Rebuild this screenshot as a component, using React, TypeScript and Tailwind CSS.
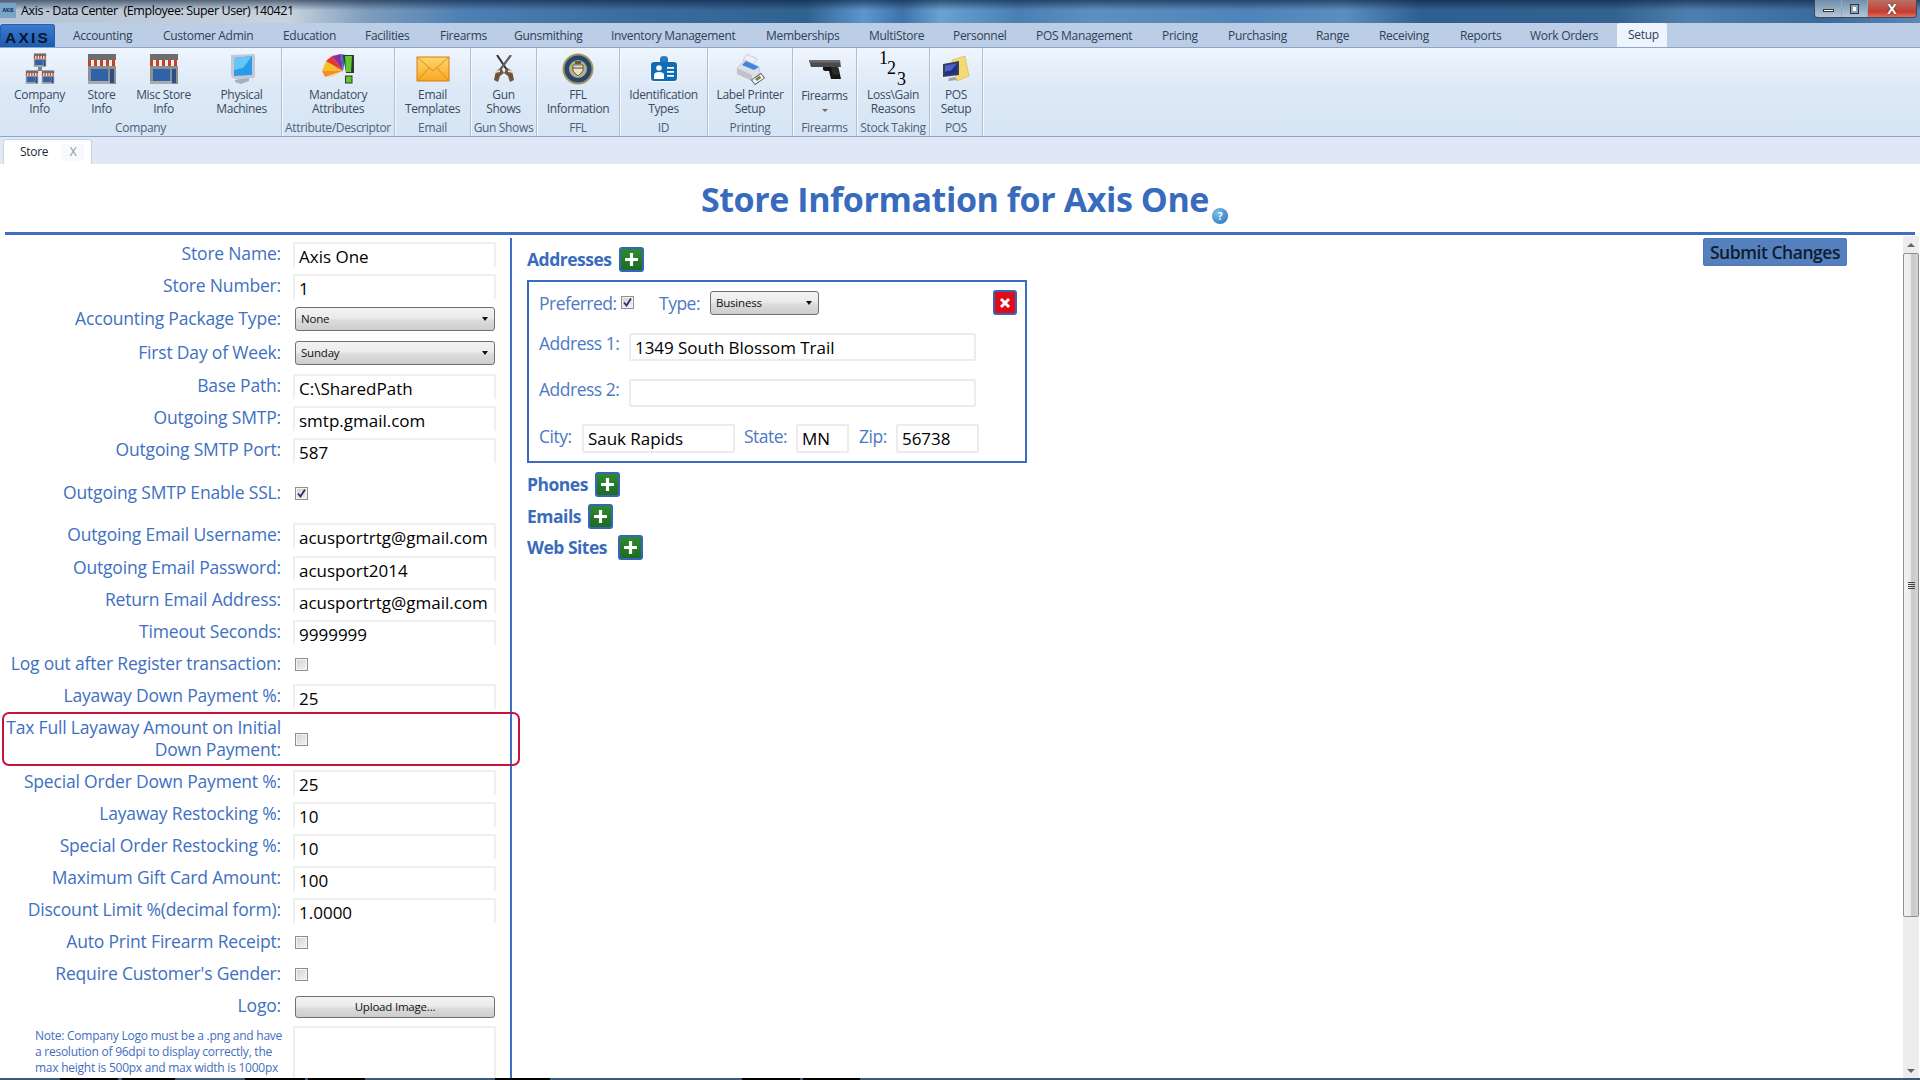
import type { ReactNode } from "react";

const FONT = "font-['Open_Sans','Noto_Sans',sans-serif]";

const MENU_TABS = [
  { name: "Accounting", w: "w-[90px]" },
  { name: "Customer Admin", w: "w-[120px]" },
  { name: "Education", w: "w-[82px]" },
  { name: "Facilities", w: "w-[75px]" },
  { name: "Firearms", w: "w-[74px]" },
  { name: "Gunsmithing", w: "w-[97px]" },
  { name: "Inventory Management", w: "w-[155px]" },
  { name: "Memberships", w: "w-[103px]" },
  { name: "MultiStore", w: "w-[84px]" },
  { name: "Personnel", w: "w-[83px]" },
  { name: "POS Management", w: "w-[126px]" },
  { name: "Pricing", w: "w-[66px]" },
  { name: "Purchasing", w: "w-[88px]" },
  { name: "Range", w: "w-[63px]" },
  { name: "Receiving", w: "w-[81px]" },
  { name: "Reports", w: "w-[70px]" },
  { name: "Work Orders", w: "w-[87px]" },
];

/* ---- ribbon icons ---- */

function StoreShape() {
  return (
    <>
      <rect x="2" y="1" width="28" height="6" fill="#6d6d6d" />
      <rect x="2" y="7" width="28" height="24" fill="#8d8f8f" />
      <rect x="1" y="7" width="30" height="6" fill="#f3efe8" />
      <path d="M2 7h3v6H2zM8 7h3v6H8zM14 7h3v6h-3zM20 7h3v6h-3zM26 7h3v6h-3z" fill="#c2412c" />
      <rect x="5" y="16" width="17" height="12" fill="#2f62a8" />
      <rect x="24" y="16" width="4" height="14" fill="#2a4f86" />
      <rect x="2" y="28" width="22" height="3" fill="#a9abab" />
    </>
  );
}

function StoreIcon() {
  return (
    <svg viewBox="0 0 32 32" className="h-[32px] w-[32px]">
      <StoreShape />
    </svg>
  );
}

function CompanyIcon() {
  return (
    <svg viewBox="0 0 32 32" className="h-[32px] w-[32px]">
      <g transform="translate(9 0) scale(0.44)">
        <StoreShape />
      </g>
      <rect x="14" y="14" width="4" height="4" fill="#7f8282" />
      <g transform="translate(1 17) scale(0.44)">
        <StoreShape />
      </g>
      <g transform="translate(17 17) scale(0.44)">
        <StoreShape />
      </g>
    </svg>
  );
}

function MonitorIcon() {
  return (
    <svg viewBox="0 0 32 32" className="h-[32px] w-[32px]">
      <path d="M5 2l22-1q2 0 2 2v20q0 2-2 2l-14 2-6-2q-2-1-2-3z" fill="#c3c8d8" />
      <path d="M8 5l18-2v19l-18 1z" fill="#2b9ae8" />
      <path d="M8 5l18-2-9 12-9 2z" fill="#66c6f5" />
      <path d="M9 27l14-2v3l-8 3-6-2z" fill="#a9adc0" />
    </svg>
  );
}

function AttributesIcon() {
  return (
    <svg viewBox="0 0 34 32" className="h-[32px] w-[34px]">
      <path d="M1 18 L22 18 L5 8z" fill="#f6c026" />
      <path d="M5 8 L22 18 L11 3z" fill="#e8362c" />
      <path d="M11 3 L22 18 L20 1z" fill="#8b2f9e" />
      <path d="M1 18 L22 18 L4 24z" fill="#f58b2a" />
      <path d="M4 24 L22 18 L12 24z" fill="#f3d9a0" />
      <path d="M20 1 L22 18 L25 2z" fill="#2c6fb8" />
      <path d="M22 2h11v18h-8z" fill="#2f3a2c" />
      <path d="M24 3h7l-1 16h-5z" fill="#5fc92f" />
      <rect x="24.5" y="23" width="6.5" height="7" fill="#5fc92f" stroke="#2f3a2c" />
    </svg>
  );
}

function EnvelopeIcon() {
  return (
    <svg viewBox="0 0 34 26" className="h-[26px] w-[34px]">
      <defs>
        <linearGradient id="env" x1="0" y1="0" x2="0" y2="1">
          <stop offset="0" stopColor="#ffd76a" />
          <stop offset="1" stopColor="#f7a823" />
        </linearGradient>
      </defs>
      <rect x="1" y="1" width="32" height="24" fill="url(#env)" stroke="#d9791a" />
      <path d="M1 1l16 14L33 1M1 25l12-13M33 25L21 12" fill="none" stroke="#dc8a1e" />
    </svg>
  );
}

function PistolsIcon() {
  return (
    <svg viewBox="0 0 22 27" className="h-[27px] w-[22px]">
      <path d="M4 0l10 15" stroke="#2e2e2e" strokeWidth="2" />
      <path d="M18 0L7 15" stroke="#5c6063" strokeWidth="2.2" />
      <path d="M14 13l5 3 2 9-4 2-2-6-4-3z" fill="#6e5338" />
      <path d="M8 13l-5 3-2 9 4 2 2-6 4-3z" fill="#6e5338" />
      <path d="M2 17l5-1M15 16l5 1" stroke="#e2e0d4" strokeWidth="2" />
    </svg>
  );
}

function SealIcon() {
  return (
    <svg viewBox="0 0 32 32" className="h-[32px] w-[32px]">
      <circle cx="16" cy="16" r="15.5" fill="#a5935a" />
      <circle cx="16" cy="16" r="13.5" fill="#24466f" />
      <circle cx="16" cy="16" r="9" fill="#b9ad84" />
      <path d="M11 12h10v6l-5 5-5-5z" fill="#e9e3cc" stroke="#51493a" strokeWidth=".8" />
      <path d="M11 15h10" stroke="#51493a" />
      <rect x="13" y="8" width="6" height="3" fill="#5f5a46" />
    </svg>
  );
}

function BadgeIcon() {
  return (
    <svg viewBox="0 0 30 27" className="h-[27px] w-[30px]">
      <rect x="1" y="6" width="28" height="21" rx="4" fill="#f4f8fc" />
      <path d="M11 7V4q0-3 4-3t4 3v3h-2V4q0-1-2-1t-2 1v3z" fill="#2c78bd" />
      <rect x="11" y="3" width="8" height="5" rx="2" fill="#2c78bd" />
      <rect x="2" y="7" width="26" height="19" rx="3" fill="#0f6cb6" />
      <circle cx="10" cy="13" r="2.800" fill="#fff" />
      <path d="M5 24v-4q0-3 5-3t5 3v4z" fill="#fff" />
      <path d="M18 12h7v1.800h-7zM18 16h7v1.800h-7zM18 20h7v1.800h-7z" fill="#fff" />
    </svg>
  );
}

function PrinterIcon() {
  return (
    <svg viewBox="0 0 30 32" className="h-[32px] w-[30px]">
      <path d="M8 7l4-6 10 5-4 5z" fill="#eef0f6" stroke="#aab2c2" strokeWidth=".6" />
      <path d="M2 15l8-8 14 7 1 6-8 7-14-7z" fill="#dcdfe6" stroke="#aeb2bc" strokeWidth=".5" />
      <path d="M7 12l4-4 13 6-5 3z" fill="#3f86dc" />
      <path d="M2 15l15 7v6l-15-7z" fill="#bfc2ca" />
      <path d="M16 27l10-7 4 5-10 7z" fill="#3c3f45" />
      <path d="M17 27l9-6 3 4-9 6z" fill="#f4f5f7" />
      <path d="M20 26l4-3 2 2-4 3z" fill="#4ca04c" />
      <path d="M23 24l2-1 1 2-2 1z" fill="#e25a2c" />
    </svg>
  );
}

function GunIcon() {
  return (
    <svg viewBox="0 0 32 20" className="h-[20px] w-[32px]">
      <path d="M0 1h31l1 7H2z" fill="#4c4c4c" />
      <path d="M0 1h31v2.500H0z" fill="#6e6e6e" />
      <path d="M14 8h15l1 3 2 9H22l-2-8h-4l-2-1z" fill="#151515" />
      <path d="M22 8h7l1 8h-6z" fill="#2d2926" />
    </svg>
  );
}

function NumbersIcon() {
  // taller than the other icons so the digits' line boxes stay inside the svg
  return (
    <svg viewBox="0 -6 34 44" className="h-[44px] w-[34px] shrink-0">
      <g fontFamily="'Liberation Serif', serif" fontSize="18" fill="#000">
        <text x="3" y="11">1</text>
        <text x="11" y="21">2</text>
        <text x="21" y="32">3</text>
      </g>
    </svg>
  );
}

function PosIcon() {
  return (
    <svg viewBox="0 0 28 26" className="h-[26px] w-[28px]">
      <path d="M10 4l13-4 4 20-12 5z" fill="#f4d977" stroke="#d8b449" strokeWidth=".6" />
      <path d="M1 8l16-3v14l-16 2z" fill="#3c3f52" />
      <path d="M3 9.500l12-2v10l-12 1.500z" fill="#1b2f8e" />
      <path d="M3 9.500l12-2-6 7-6 1z" fill="#4a62c8" />
      <path d="M7 22l6-1 2 3-9 1z" fill="#9ea1ad" />
    </svg>
  );
}

/* ---- ribbon pieces ---- */

function RibbonItem({ icon, lines, w }: { icon: ReactNode; lines: string[]; w: string }) {
  return (
    <div className={`${w} flex flex-col items-center`}>
      <div className="flex h-[34px] items-center justify-center">{icon}</div>
      <div className="mt-[2px] text-center text-[12px] leading-[14px] tracking-[-0.35px] text-[#394b63]">
        {lines.map((l) => (
          <div key={l} className="whitespace-nowrap">{l}</div>
        ))}
      </div>
    </div>
  );
}

function RibbonGroup({ label, w, children }: { label: string; w: string; children: ReactNode }) {
  return (
    <div className={`${w} flex h-full flex-col border-r border-[#aebfd6] shadow-[1px_0_0_#f4f8fd]`}>
      <div className="flex flex-1 justify-center pt-[4px]">{children}</div>
      <div className="pb-[1px] text-center text-[12px] leading-[14px] tracking-[-0.35px] whitespace-nowrap text-[#4d5f78]">
        {label}
      </div>
    </div>
  );
}

/* ---- form pieces ---- */

function Checkbox({ checked }: { checked?: boolean }) {
  return (
    <div className="flex h-[13px] w-[13px] shrink-0 items-center justify-center border border-[#8e8f8f] bg-[linear-gradient(135deg,#d0d0d8,#f4f4f6)] shadow-[inset_0_0_0_1px_#f4f4f4]">
      {checked && (
        <svg viewBox="0 0 11 11" className="h-[11px] w-[11px]">
          <path d="M2 5.500l2.500 3L9 1.500" fill="none" stroke="#2b2f6b" strokeWidth="1.8" />
        </svg>
      )}
    </div>
  );
}

function Select({ value, w }: { value: string; w: string }) {
  return (
    <div className={`${w} flex h-[24px] items-center justify-between rounded-[3px] border border-[#707070] bg-[linear-gradient(180deg,#f3f3f3_0%,#ebebeb_45%,#dcdcdc_55%,#cdcdcd_100%)] px-[5px] text-[11.5px] tracking-[-0.2px] text-[#111]`}>
      <span>{value}</span>
      <span className="mr-[1px] h-0 w-0 border-x-[3.5px] border-t-[4px] border-x-transparent border-t-[#111]" />
    </div>
  );
}

function FormInput({ value }: { value?: string }) {
  return (
    <div className="ml-[-2px] h-[25px] w-[203px] rounded-t-[2px] border-2 border-b-0 border-[#efefef] pl-[4px] text-[17px] leading-[26px] tracking-[0px] whitespace-nowrap text-black">
      {value}
    </div>
  );
}

function BoxInput({ value, w, h }: { value?: string; w: string; h: string }) {
  return (
    <div className={`${w} ${h} rounded-[2px] border-2 border-[#ececec] pl-[4px] text-[17px] leading-[25px] tracking-[-0.05px] whitespace-nowrap text-black`}>
      {value}
    </div>
  );
}

function FormRow({ label, h, children }: { label: string; h: string; children: ReactNode }) {
  return (
    <div className={`${h} flex items-start`}>
      <div className="w-[281px] shrink-0 text-right text-[17.500px] leading-[22px] tracking-[-0.18px] whitespace-nowrap text-[#4070c2]">
        {label}
      </div>
      <div className="ml-[14px]">{children}</div>
    </div>
  );
}

function CheckRow({ label, h, checked }: { label: string; h: string; checked?: boolean }) {
  return (
    <FormRow label={label} h={h}>
      <div className="pt-[6px]">
        <Checkbox checked={checked} />
      </div>
    </FormRow>
  );
}

function SectionHead({ label, w }: { label: string; w: string }) {
  return (
    <div className="flex items-center">
      <span className={`${w} text-[17.500px] leading-[25px] font-bold tracking-[-0.5px] whitespace-nowrap text-[#3a6bbd]`}>{label}</span>
      <div className="flex h-[25px] w-[25px] items-center justify-center rounded-[3px] border-2 border-[#3467b8] bg-[linear-gradient(180deg,#2f8a2f,#1f6a24)]">
        <svg viewBox="0 0 14 14" className="h-[15px] w-[15px]">
          <path d="M7 1v12M1 7h12" stroke="#fff" strokeWidth="3" />
        </svg>
      </div>
    </div>
  );
}

const boxLabel = "text-[17.500px] leading-[24px] tracking-[-0.5px] whitespace-nowrap text-[#4d79c4]";

export default function App() {
  return (
    <div className={`${FONT} flex h-[1080px] w-[1920px] flex-col overflow-hidden bg-white`}>
      {/* window title bar */}
      <div className="flex h-[23px] shrink-0 items-start bg-[linear-gradient(180deg,rgba(8,26,54,0.6)_0%,rgba(8,26,54,0)_45%),linear-gradient(90deg,#b4c3d3_0,#c8d3de_15%,#7f9dbd_19%,#4f80b3_24%,#3c6c9f_33%,#30628f_42%,#5d96cd_45%,#3f73a8_47%,#6aa2d2_49%,#4a7fb2_53%,#5d90c0_57%,#4f84b8_65%,#5b8ebf_70%,#2f5f90_74%,#33628f_84%,#4f7fae_88%,#3a6a9c_95%,#5c88b3_100%)]">
        <div className="mt-[3px] flex h-[15px] w-[16px] items-center justify-center bg-[#7aa3c8] text-[5px] font-bold text-[#10233c]">
          AXIS
        </div>
        <span className="mt-[2px] ml-[5px] text-[12.500px] leading-[17px] tracking-[-0.4px] whitespace-pre text-black">
          Axis - Data Center  (Employee: Super User) 140421
        </span>
        <div className="mr-[3px] ml-auto flex h-[18px] overflow-hidden rounded-b-[4px] border border-t-0 border-[#3d4a5c]">
          <div className="flex w-[27px] items-center justify-center border-r border-[#93a9c2] bg-[linear-gradient(180deg,#6f8dac,#b5c7d9)]">
            <div className="mt-[3px] h-[3px] w-[11px] border border-[#333] bg-white" />
          </div>
          <div className="flex w-[26px] items-center justify-center border-r border-[#93a9c2] bg-[linear-gradient(180deg,#6f8dac,#b5c7d9)]">
            <div className="h-[10px] w-[9px] border border-[#333] bg-white shadow-[inset_0_0_0_2px_#8ea5bd]" />
          </div>
          <div className="flex w-[48px] items-center justify-center bg-[linear-gradient(180deg,#b87068,#c73c2e_70%,#e0705c)] text-[14px] leading-none font-bold text-white [text-shadow:0_0_2px_#222]">
            X
          </div>
        </div>
      </div>

      {/* menu tabs */}
      <div className="flex h-[23.500px] shrink-0 items-end bg-[#bbcee6]">
        <div className="flex h-[23px] w-[55px] items-end justify-center rounded-t-[3px] border border-b-0 border-[#2a5da8] bg-[linear-gradient(180deg,#3a7bd0,#1c5cb0)] pb-[1px] text-[15.500px] leading-[17px] font-bold tracking-[2.2px] text-[#08172b] [font-family:'Liberation_Sans',sans-serif]">
          AXIS
        </div>
        <div className="flex h-[23px]">
          <div className="w-[3px]" />
          {MENU_TABS.map((t) => (
            <div key={t.name} className={`${t.w} pl-[15px] text-[12px] leading-[23px] tracking-[-0.3px] whitespace-nowrap text-[#2f4057]`}>
              {t.name}
            </div>
          ))}
        </div>
        <div className="z-10 ml-[15px] h-[24px] w-[50px] rounded-t-[3px] bg-[#edf4fd] pl-[11px] text-[12px] leading-[23px] tracking-[-0.3px] text-[#2f4057]">
          Setup
        </div>
      </div>

      {/* ribbon */}
      <div className="flex h-[90px] shrink-0 border-y border-[#8ca5c8] bg-[linear-gradient(180deg,#eef5fe_0%,#dde9f6_45%,#d7e4f3_100%)]">
        <RibbonGroup label="Company" w="w-[282px]">
          <RibbonItem w="w-[78px]" icon={<CompanyIcon />} lines={["Company", "Info"]} />
          <RibbonItem w="w-[46px]" icon={<StoreIcon />} lines={["Store", "Info"]} />
          <RibbonItem w="w-[78px]" icon={<StoreIcon />} lines={["Misc Store", "Info"]} />
          <RibbonItem w="w-[78px]" icon={<MonitorIcon />} lines={["Physical", "Machines"]} />
        </RibbonGroup>
        <RibbonGroup label="Attribute/Descriptor" w="w-[113px]">
          <RibbonItem w="w-[100px]" icon={<AttributesIcon />} lines={["Mandatory", "Attributes"]} />
        </RibbonGroup>
        <RibbonGroup label="Email" w="w-[76px]">
          <RibbonItem w="w-[76px]" icon={<EnvelopeIcon />} lines={["Email", "Templates"]} />
        </RibbonGroup>
        <RibbonGroup label="Gun Shows" w="w-[66px]">
          <RibbonItem w="w-[66px]" icon={<PistolsIcon />} lines={["Gun", "Shows"]} />
        </RibbonGroup>
        <RibbonGroup label="FFL" w="w-[83px]">
          <RibbonItem w="w-[83px]" icon={<SealIcon />} lines={["FFL", "Information"]} />
        </RibbonGroup>
        <RibbonGroup label="ID" w="w-[88px]">
          <RibbonItem w="w-[88px]" icon={<BadgeIcon />} lines={["Identification", "Types"]} />
        </RibbonGroup>
        <RibbonGroup label="Printing" w="w-[85px]">
          <RibbonItem w="w-[85px]" icon={<PrinterIcon />} lines={["Label Printer", "Setup"]} />
        </RibbonGroup>
        <RibbonGroup label="Firearms" w="w-[64px]">
          <div className="flex w-[64px] flex-col items-center">
            <div className="flex h-[34px] items-center justify-center">
              <GunIcon />
            </div>
            <div className="mt-[3px] text-[12px] leading-[14px] tracking-[-0.35px] text-[#394b63]">Firearms</div>
            <div className="mt-[6px] h-0 w-0 border-x-[3px] border-t-[3px] border-x-transparent border-t-[#6b6b5a]" />
          </div>
        </RibbonGroup>
        <RibbonGroup label="Stock Taking" w="w-[73px]">
          <RibbonItem w="w-[73px]" icon={<NumbersIcon />} lines={["Loss\\Gain", "Reasons"]} />
        </RibbonGroup>
        <RibbonGroup label="POS" w="w-[53px]">
          <RibbonItem w="w-[53px]" icon={<PosIcon />} lines={["POS", "Setup"]} />
        </RibbonGroup>
      </div>

      {/* document tab strip */}
      <div className="flex h-[27.500px] shrink-0 items-end bg-[#dfe8f4] pl-[3px]">
        <div className="flex h-[25px] w-[89px] items-center rounded-t-[3px] border border-b-0 border-[#c6d2e2] bg-white pl-[16px]">
          <span className="text-[12px] tracking-[-0.3px] text-[#1d2a3a]">Store</span>
          <span className="ml-[14px] flex h-[17px] w-[22px] items-center justify-center rounded-[2px] bg-[#f7f9fb] text-[12px] text-[#8a96a6]">X</span>
        </div>
      </div>

      {/* page heading */}
      <div className="mx-[5px] flex h-[71px] shrink-0 justify-center border-b-[3px] border-[#3f6fc0] pl-[9px]">
        <h1 className="pt-[10px] text-[34px] leading-[50px] font-bold tracking-[-0.42px] whitespace-nowrap text-[#386bbd]">
          Store Information for Axis One
        </h1>
        <div className="mt-[44px] ml-[3px] flex h-[16px] w-[16px] items-center justify-center rounded-full bg-[radial-gradient(circle_at_35%_30%,#7fc0ee,#1f6db5)] text-[10px] font-bold text-white">
          ?
        </div>
      </div>

      <div className="flex min-h-0 flex-1">
        {/* left form column */}
        <div className="w-[512px] shrink-0 pt-[3px]">
          <div className="h-full border-r-2 border-[#3f6fc0]">
            <div className="pt-[4px]">
              <FormRow label="Store Name:" h="h-[32px]"><FormInput value="Axis One" /></FormRow>
              <FormRow label="Store Number:" h="h-[33px]"><FormInput value="1" /></FormRow>
              <FormRow label="Accounting Package Type:" h="h-[34px]"><Select w="w-[200px]" value="None" /></FormRow>
              <FormRow label="First Day of Week:" h="h-[33px]"><Select w="w-[200px]" value="Sunday" /></FormRow>
              <FormRow label="Base Path:" h="h-[32px]"><FormInput value="C:\SharedPath" /></FormRow>
              <FormRow label="Outgoing SMTP:" h="h-[32px]"><FormInput value="smtp.gmail.com" /></FormRow>
              <FormRow label="Outgoing SMTP Port:" h="h-[43px]"><FormInput value="587" /></FormRow>
              <CheckRow label="Outgoing SMTP Enable SSL:" h="h-[42px]" checked />
              <FormRow label="Outgoing Email Username:" h="h-[33px]"><FormInput value="acusportrtg@gmail.com" /></FormRow>
              <FormRow label="Outgoing Email Password:" h="h-[32px]"><FormInput value="acusport2014" /></FormRow>
              <FormRow label="Return Email Address:" h="h-[32px]"><FormInput value="acusportrtg@gmail.com" /></FormRow>
              <FormRow label="Timeout Seconds:" h="h-[32px]"><FormInput value="9999999" /></FormRow>
              <CheckRow label="Log out after Register transaction:" h="h-[32px]" />
              <FormRow label="Layaway Down Payment %:" h="h-[28px]"><FormInput value="25" /></FormRow>

              {/* highlighted row */}
              <div className="relative flex h-[58px] items-start pt-[4px]">
                <div className="w-[281px] shrink-0 text-right text-[17.500px] leading-[22px] tracking-[-0.18px] whitespace-nowrap text-[#4070c2]">
                  Tax Full Layaway Amount on Initial<br />Down Payment:
                </div>
                <div className="mt-[17px] ml-[14px]">
                  <Checkbox />
                </div>
                <div className="pointer-events-none absolute top-0 left-[2px] z-10 h-[54px] w-[518px] rounded-[7px] border-2 border-[#c5143c]" />
              </div>

              <FormRow label="Special Order Down Payment %:" h="h-[32px]"><FormInput value="25" /></FormRow>
              <FormRow label="Layaway Restocking %:" h="h-[32px]"><FormInput value="10" /></FormRow>
              <FormRow label="Special Order Restocking %:" h="h-[32px]"><FormInput value="10" /></FormRow>
              <FormRow label="Maximum Gift Card Amount:" h="h-[32px]"><FormInput value="100" /></FormRow>
              <FormRow label="Discount Limit %(decimal form):" h="h-[32px]"><FormInput value="1.0000" /></FormRow>
              <CheckRow label="Auto Print Firearm Receipt:" h="h-[32px]" />
              <CheckRow label="Require Customer's Gender:" h="h-[32px]" />
              <FormRow label="Logo:" h="h-[32px]">
                <div className="mt-[2px] flex h-[22px] w-[200px] items-center justify-center rounded-[3px] border border-[#707070] bg-[linear-gradient(180deg,#f3f3f3_0%,#ebebeb_45%,#dcdcdc_55%,#cdcdcd_100%)] text-[11.500px] tracking-[-0.2px] text-[#111]">
                  Upload Image...
                </div>
              </FormRow>
              <div className="flex items-start">
                <div className="w-[281px] shrink-0 pl-[35px] text-[12px] leading-[16px] tracking-[-0.25px] whitespace-nowrap text-[#3f6ec0]">
                  <p className="mt-[2px]">Note: Company Logo must be a .png and have</p>
                  <p>a resolution of 96dpi to display correctly, the</p>
                  <p>max height is 500px and max width is 1000px</p>
                </div>
                <div className="ml-[12px]">
                  <div className="h-[60px] w-[203px] rounded-t-[2px] border-2 border-b-0 border-[#efefef]" />
                </div>
              </div>
            </div>
          </div>
        </div>

        {/* contact details column */}
        <div className="ml-[15px] w-[500px] shrink-0 pt-[12px]">
          <SectionHead label="Addresses" w="w-[92px]" />
          <div className="mt-[8px] h-[183px] border-2 border-[#3a6bbd] pl-[10px]">
            <div className="mt-[8px] flex h-[25px] items-center">
              <span className={`${boxLabel} w-[82px]`}>Preferred:</span>
              <Checkbox checked />
              <span className={`${boxLabel} ml-[25px] w-[51px]`}>Type:</span>
              <Select w="w-[109px]" value="Business" />
              <div className="mr-[8px] ml-auto flex h-[25px] w-[24px] items-center justify-center rounded-[3px] border-2 border-[#3467b8] bg-[#e30b17]">
                <svg viewBox="0 0 12 12" className="h-[12px] w-[12px]">
                  <path d="M2 2l8 8M10 2l-8 8" stroke="#fff" strokeWidth="3" />
                </svg>
              </div>
            </div>
            <div className="mt-[18px] flex h-[28px] items-start">
              <span className={`${boxLabel} mt-[-2px] w-[90px]`}>Address 1:</span>
              <BoxInput w="w-[347px]" h="h-[28px]" value="1349 South Blossom Trail" />
            </div>
            <div className="mt-[18px] flex h-[28px] items-start">
              <span className={`${boxLabel} mt-[-2px] w-[90px]`}>Address 2:</span>
              <BoxInput w="w-[347px]" h="h-[28px]" />
            </div>
            <div className="mt-[17px] flex h-[29px] items-start">
              <span className={`${boxLabel} w-[43px]`}>City:</span>
              <BoxInput w="w-[153px]" h="h-[29px]" value="Sauk Rapids" />
              <span className={`${boxLabel} ml-[9px] w-[52px]`}>State:</span>
              <BoxInput w="w-[53px]" h="h-[29px]" value="MN" />
              <span className={`${boxLabel} ml-[10px] w-[37px]`}>Zip:</span>
              <BoxInput w="w-[83px]" h="h-[29px]" value="56738" />
            </div>
          </div>
          <div className="mt-[9px]"><SectionHead label="Phones" w="w-[68px]" /></div>
          <div className="mt-[7px]"><SectionHead label="Emails" w="w-[61px]" /></div>
          <div className="mt-[6px]"><SectionHead label="Web Sites" w="w-[91px]" /></div>
        </div>

        <div className="flex flex-1 justify-end pt-[3px] pr-[56px]">
          <div className="flex h-[28px] w-[144px] items-center justify-center rounded-[2px] border border-[#4f78b8] bg-[#5580bd] text-[17.500px] font-semibold tracking-[-0.45px] text-[#0e1c30]">
            Submit Changes
          </div>
        </div>

        {/* scrollbar */}
        <div className="mt-[1px] mr-[1px] flex w-[16px] shrink-0 flex-col bg-[#ededed]">
          <div className="flex h-[17px] items-center justify-center">
            <span className="h-0 w-0 border-x-[4px] border-b-[4px] border-x-transparent border-b-[#666]" />
          </div>
          <div className="flex h-[664px] items-center justify-center rounded-[2px] border border-[#8f8f8f] bg-[linear-gradient(90deg,#f2f2f2_0%,#ececec_45%,#c8c8c8_55%,#d4d4d4_100%)]">
            <div className="flex flex-col gap-[1px]">
              <span className="h-[1px] w-[7px] bg-[#444]" />
              <span className="h-[1px] w-[7px] bg-[#444]" />
              <span className="h-[1px] w-[7px] bg-[#444]" />
              <span className="h-[1px] w-[7px] bg-[#444]" />
            </div>
          </div>
          <div className="flex-1" />
          <div className="flex h-[15px] items-center justify-center">
            <span className="h-0 w-0 border-x-[4px] border-t-[4px] border-x-transparent border-t-[#666]" />
          </div>
        </div>
      </div>

      {/* sliver of the taskbar */}
      <div className="h-[2px] shrink-0 bg-[linear-gradient(90deg,#3d5a78_0,#3d5a78_60px,#000_60px,#000_118px,#3d5a78_118px,#3d5a78_122px,#000_122px,#000_175px,#3d5a78_175px,#3d5a78_245px,#000_245px,#000_305px,#3d5a78_305px,#3d5a78_308px,#000_308px,#000_365px,#3d5a78_365px,#3d5a78_495px,#000_495px,#000_550px,#3d5a78_550px,#3d5a78_742px,#000_742px,#000_800px,#3d5a78_800px,#3d5a78_803px,#000_803px,#000_860px,#3d5a78_860px,#3d5a78_100%)]" />
    </div>
  );
}
